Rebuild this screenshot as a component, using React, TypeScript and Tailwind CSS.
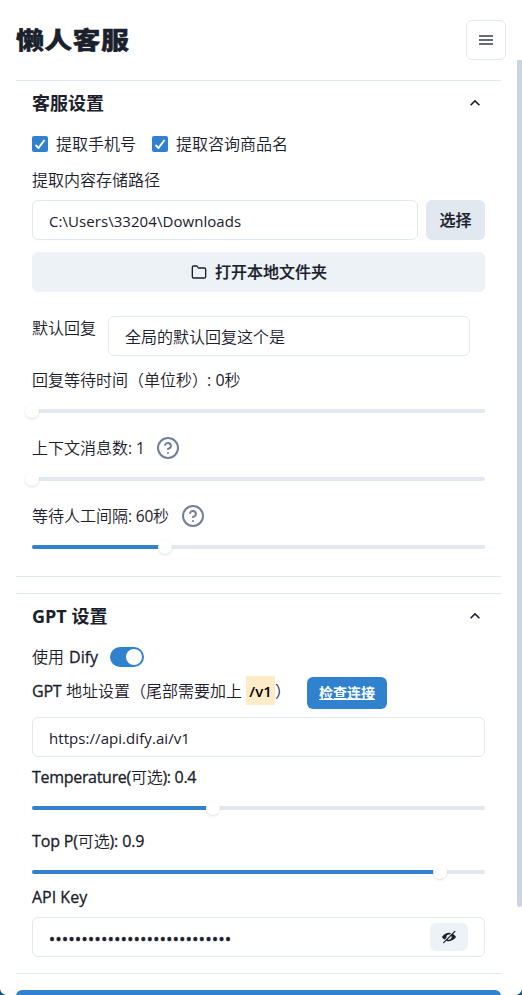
import type { ReactNode } from "react";
import { FiFolder, FiHelpCircle } from "react-icons/fi";

const HamburgerIcon = () => (
  <svg viewBox="0 0 24 24" className="size-4 text-[#666c76]" fill="currentColor">
    <path d="M1.5 4.5h21v3h-21zM1.5 10.5h21v3h-21zM1.5 16.5h21v3h-21z" />
  </svg>
);

const ChevronUp = () => (
  <svg viewBox="0 0 24 24" className="size-5 rotate-180" fill="currentColor">
    <path d="M16.59 8.59L12 13.17 7.41 8.59 6 10l6 6 6-6z" />
  </svg>
);

const ViewOffIcon = () => (
  <svg viewBox="0 0 24 24" className="size-3.5" fill="currentColor">
    <path d="M23.2,10.549a20.954,20.954,0,0,0-4.3-3.6l4-3.995a1,1,0,1,0-1.414-1.414l-.018.018a.737.737,0,0,1-.173.291l-19.5,19.5c-.008.007-.018.009-.026.017a1,1,0,0,0,1.631,1.088l4.146-4.146a11.26,11.26,0,0,0,4.31.939h.3c4.256,0,8.489-2.984,11.051-5.8A2.171,2.171,0,0,0,23.2,10.549ZM16.313,13.27a4.581,4.581,0,0,1-3,3.028,4.3,4.3,0,0,1-3.1-.19.253.253,0,0,1-.068-.407l5.56-5.559a.252.252,0,0,1,.407.067A4.3,4.3,0,0,1,16.313,13.27Z" />
    <path d="M7.615,13.4a.244.244,0,0,0,.061-.24A4.315,4.315,0,0,1,7.5,12,4.5,4.5,0,0,1,12,7.5a4.276,4.276,0,0,1,1.16.173.244.244,0,0,0,.24-.062l1.941-1.942a.254.254,0,0,0-.1-.421A10.413,10.413,0,0,0,12,4.75C7.7,4.692,3.4,7.7.813,10.549a2.15,2.15,0,0,0-.007,2.9,21.209,21.209,0,0,0,3.438,3.03.256.256,0,0,0,.326-.029Z" />
  </svg>
);

function Check({ label }: { label: string }) {
  return (
    <label className="flex items-center gap-2">
      <span className="flex size-4 items-center justify-center rounded-xs bg-[#3182ce] text-white">
        <svg viewBox="0 0 12 10" className="w-[12px]" fill="none" stroke="currentColor" strokeWidth="2">
          <polyline points="1.5 6 4.5 9 10.5 1" />
        </svg>
      </span>
      <span>{label}</span>
    </label>
  );
}

function Slider({ value }: { value: number }) {
  return (
    <div className="relative flex h-[14px] items-center">
      <div className="h-1 w-full overflow-hidden rounded-xs bg-[#e2e8f0]">
        <div className="h-full bg-[#3182ce]" style={{ width: `${value}%` }} />
      </div>
      <div
        className="absolute top-0 size-[14px] -translate-x-1/2 rounded-full bg-white shadow"
        style={{ left: `${value}%` }}
      />
    </div>
  );
}

function Latin({ children }: { children: ReactNode }) {
  return <span className="font-normal whitespace-pre [-webkit-text-stroke:0.3px]">{children}</span>;
}

function SectionTitle({ children }: { children: ReactNode }) {
  return (
    <div className="flex h-[44px] items-center justify-between text-lg font-bold">
      <h2 className="pb-px">{children}</h2>
      <ChevronUp />
    </div>
  );
}

export default function App() {
  return (
    <div className="relative h-[995px] w-[522px] overflow-hidden bg-white font-['Open_Sans','Noto_Sans_CJK_SC',sans-serif] text-base leading-6 font-[350] text-[#1a202c]">
      <header className="flex h-20 items-center justify-between px-4">
        <h1 className="origin-center scale-y-[0.84] pb-px text-[28px] leading-8 font-black tracking-[0.3px] [-webkit-text-stroke:0.4px]">
          懒人客服
        </h1>
        <button className="flex size-10 items-center justify-center rounded-md border border-[#e2e8f0]">
          <HamburgerIcon />
        </button>
      </header>

      <main className="ml-4 w-[485px]">
        <section className="h-[497px] border-y border-[#e2e8f0] px-4">
          <SectionTitle>客服设置</SectionTitle>
          <div className="mt-[7px] flex gap-4">
            <Check label="提取手机号" />
            <Check label="提取咨询商品名" />
          </div>
          <div className="mt-3">提取内容存储路径</div>
          <div className="mt-2 flex gap-2">
            <div className="flex h-10 w-[386px] items-center rounded-md border border-[#e2e8f0] px-4 pt-[2px] text-[15px] font-normal tracking-[0.06px]">
              C:\Users\33204\Downloads
            </div>
            <button className="h-10 w-[59px] rounded-md bg-[#e2e8f0] font-medium [-webkit-text-stroke:0.2px]">选择</button>
          </div>
          <button className="mt-3 flex h-10 w-full items-center justify-center gap-2 rounded-md bg-[#edf2f7] pl-px font-medium">
            <FiFolder className="size-4" />
            <span className="[-webkit-text-stroke:0.2px]">打开本地文件夹</span>
          </button>
          <div className="mt-6 flex gap-3">
            <div>默认回复</div>
            <div className="flex h-10 w-[362px] items-center rounded-md border border-[#e2e8f0] px-4 pt-[2px]">
              全局的默认回复这个是
            </div>
          </div>
          <div className="mt-3 mb-[12px] flex h-6 items-center">
            回复等待时间（单位秒）<span className="-ml-px font-normal whitespace-pre">: 0</span>秒
          </div>
          <Slider value={0} />
          <div className="mt-[18px] mb-[12px] flex h-6 items-center">
            上下文消息数<span className="w-4 text-[15.5px] font-normal whitespace-pre">: 1</span>
            <FiHelpCircle className="ml-3 size-6 text-[#718096]" />
          </div>
          <Slider value={0} />
          <div className="mt-[18px] mb-[12px] flex h-6 items-center">
            等待人工间隔<span className="w-[25px] text-[15.5px] font-normal tracking-[-0.2px] whitespace-pre">: 60</span>秒
            <FiHelpCircle className="ml-3 size-6 text-[#718096]" />
          </div>
          <Slider value={29.4} />
        </section>

        <section className="mt-4 h-[381px] border-y border-[#e2e8f0] px-4">
          <SectionTitle>GPT 设置</SectionTitle>
          <div className="mt-[7px] flex h-6 items-center">
            <span>使用</span>
            <span className="ml-[5px] w-[29px]">
              <Latin>Dify</Latin>
            </span>
            <span className="ml-3 flex h-5 w-[34px] items-center justify-end rounded-full bg-[#3182ce] p-[2px]">
              <span className="size-4 rounded-full bg-white" />
            </span>
          </div>
          <div className="mt-2 flex h-8 items-center">
            <span className="-mt-1 flex items-center">
              <span className="w-[34px] tracking-[-0.2px]">
                <Latin>GPT</Latin>
              </span>
              <span>地址设置（尾部需要加上</span>
              <span className="-mt-px ml-1 flex h-[29px] w-[29px] items-center justify-center bg-[#feebc8] pt-px text-[15px] font-semibold text-black">
                /v1
              </span>
              <span>）</span>
            </span>
            <button className="ml-4 h-8 w-20 rounded-md bg-[#3182ce] text-sm font-bold text-white underline decoration-1 underline-offset-1">
              检查连接
            </button>
          </div>
          <div className="mt-2 flex h-10 items-center rounded-md border border-[#e2e8f0] px-4 pt-[2px] text-[15px] font-normal tracking-[0.06px]">
            https://api.dify.ai/v1
          </div>
          <div className="mt-[8px] mb-[12px] flex h-6 items-center tracking-[-0.3px]">
            <Latin>Temperature(</Latin>可选<Latin>): 0.4</Latin>
          </div>
          <Slider value={40} />
          <div className="mt-[14px] mb-[12px] flex h-6 items-center tracking-[-0.15px]">
            <Latin>Top P(</Latin>可选<Latin>): 0.9</Latin>
          </div>
          <Slider value={90} />
          <div className="mt-[6px] flex h-6 items-center">
            <Latin>API Key</Latin>
          </div>
          <div className="mt-[8px] flex h-10 items-center justify-between rounded-md border border-[#e2e8f0] pr-4 pl-4">
            <span className="pt-[3px] text-base font-normal tracking-[0.5px] [-webkit-text-stroke:0.6px]">
              ••••••••••••••••••••••••••••
            </span>
            <button className="flex h-7 w-[38px] items-center justify-center rounded-md bg-[#edf2f7]">
              <ViewOffIcon />
            </button>
          </div>
        </section>

        <button className="mt-4 h-10 w-full rounded-md bg-[#3182ce]" />
      </main>

      <div className="absolute top-[60px] right-0 h-[847px] w-[5px] rounded-b-full bg-[#cbd5e0]" />
      <div className="absolute bottom-0 left-0 size-[7px] bg-[radial-gradient(circle_at_100%_0%,transparent_6.5px,#17507c_7.5px)]" />
      <div className="absolute right-0 bottom-0 size-[7px] bg-[radial-gradient(circle_at_0%_0%,transparent_6.5px,#17507c_7.5px)]" />
    </div>
  );
}
